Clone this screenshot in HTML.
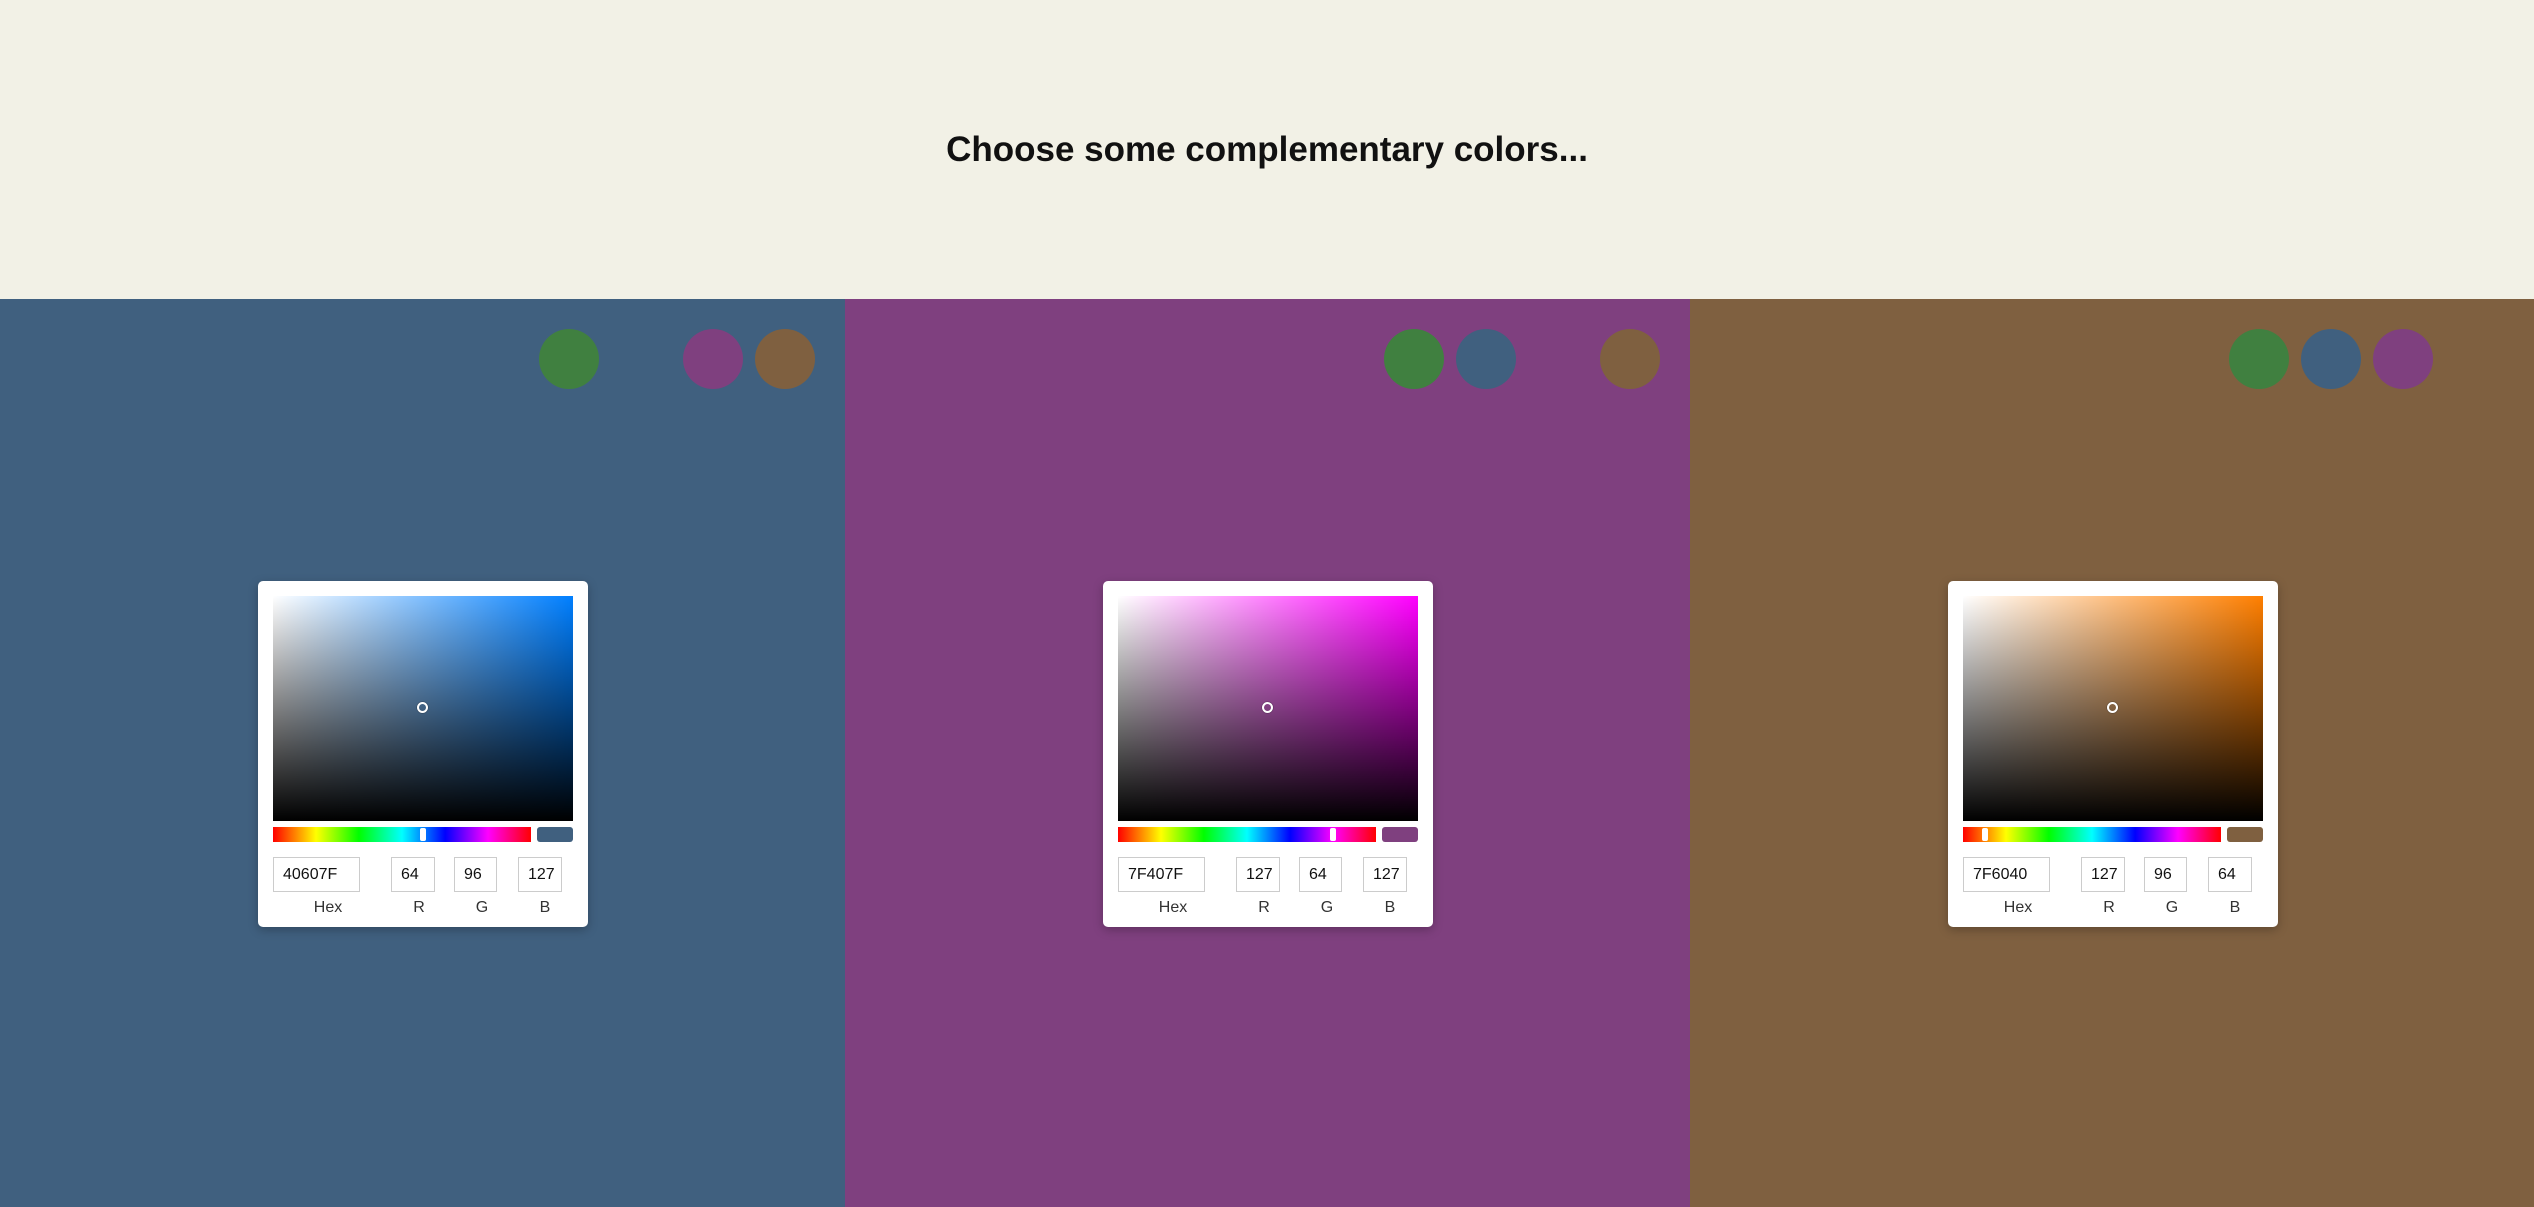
<!DOCTYPE html>
<html><head><meta charset="utf-8"><style>
*{box-sizing:border-box;margin:0;padding:0}
body{width:2534px;height:1207px;overflow:hidden;font-family:"Liberation Sans",sans-serif;background:#F2F1E6;position:relative}
h1{position:absolute;top:0;left:0;width:2534px;height:299px;line-height:300px;text-align:center;font-size:35px;font-weight:bold;color:#111}
.p{position:absolute;top:299px;height:908px}
.c{position:absolute;width:60px;height:60px;border-radius:50%;top:30px}
.card{position:absolute;left:258px;top:282px;width:330px;height:346px;background:#fff;border-radius:5px;box-shadow:0 3px 10px rgba(0,0,0,.25)}
.sv{position:absolute;left:15px;top:15px;width:300px;height:225px}
.sv .w{position:absolute;inset:0;background:linear-gradient(to right,#fff,rgba(255,255,255,0))}
.sv .b{position:absolute;inset:0;background:linear-gradient(to bottom,rgba(0,0,0,0),#000)}
.cur{position:absolute;width:11px;height:11px;border:2px solid #fff;border-radius:50%;left:159px;top:121px;box-shadow:0 0 1px #000}
.hue{position:absolute;left:15px;top:246px;width:258px;height:15px;background:linear-gradient(to right,#f00,#ff0 16.7%,#0f0 33.3%,#0ff 50%,#00f 66.7%,#f0f 83.3%,#f00)}
.th{position:absolute;top:1px;width:6px;height:13px;background:#fff;border-radius:2px}
.sw{position:absolute;left:279px;top:246px;width:36px;height:15px;border-radius:3px}
.in{position:absolute;top:276px;height:35px;border:1px solid #ccc;font-size:16px;line-height:33px;padding-left:9px;color:#111}
.lb{position:absolute;top:318px;font-size:16px;color:#333;text-align:center;width:60px}
</style></head><body>
<h1>Choose some complementary colors...</h1>

<div class="p" style="left:0;width:845px;background:#40607F">
<div class="c" style="left:539px;background:#408040"></div>
<div class="c" style="left:683px;background:#7F407F"></div>
<div class="c" style="left:755px;background:#7F6040"></div>
<div class="card">
<div class="sv" style="background:#007FFF"><div class="w"></div><div class="b"></div></div>
<div class="cur"></div>
<div class="hue"><div class="th" style="left:147px"></div></div>
<div class="sw" style="background:#40607F"></div>
<div class="in" style="left:15px;width:87px">40607F</div>
<div class="in" style="left:133px;width:44px">64</div>
<div class="in" style="left:196px;width:43px">96</div>
<div class="in" style="left:260px;width:44px">127</div>
<div class="lb" style="left:40px">Hex</div><div class="lb" style="left:131px">R</div><div class="lb" style="left:194px">G</div><div class="lb" style="left:257px">B</div>
</div></div>

<div class="p" style="left:845px;width:845px;background:#7F407F">
<div class="c" style="left:539px;background:#408040"></div>
<div class="c" style="left:611px;background:#40607F"></div>
<div class="c" style="left:755px;background:#7F6040"></div>
<div class="card">
<div class="sv" style="background:#FF00FF"><div class="w"></div><div class="b"></div></div>
<div class="cur"></div>
<div class="hue"><div class="th" style="left:212px"></div></div>
<div class="sw" style="background:#7F407F"></div>
<div class="in" style="left:15px;width:87px">7F407F</div>
<div class="in" style="left:133px;width:44px">127</div>
<div class="in" style="left:196px;width:43px">64</div>
<div class="in" style="left:260px;width:44px">127</div>
<div class="lb" style="left:40px">Hex</div><div class="lb" style="left:131px">R</div><div class="lb" style="left:194px">G</div><div class="lb" style="left:257px">B</div>
</div></div>

<div class="p" style="left:1690px;width:844px;background:#7F6040">
<div class="c" style="left:539px;background:#408040"></div>
<div class="c" style="left:611px;background:#40607F"></div>
<div class="c" style="left:683px;background:#7F407F"></div>
<div class="card">
<div class="sv" style="background:#FF7F00"><div class="w"></div><div class="b"></div></div>
<div class="cur"></div>
<div class="hue"><div class="th" style="left:19px"></div></div>
<div class="sw" style="background:#7F6040"></div>
<div class="in" style="left:15px;width:87px">7F6040</div>
<div class="in" style="left:133px;width:44px">127</div>
<div class="in" style="left:196px;width:43px">96</div>
<div class="in" style="left:260px;width:44px">64</div>
<div class="lb" style="left:40px">Hex</div><div class="lb" style="left:131px">R</div><div class="lb" style="left:194px">G</div><div class="lb" style="left:257px">B</div>
</div></div>
</body></html>
